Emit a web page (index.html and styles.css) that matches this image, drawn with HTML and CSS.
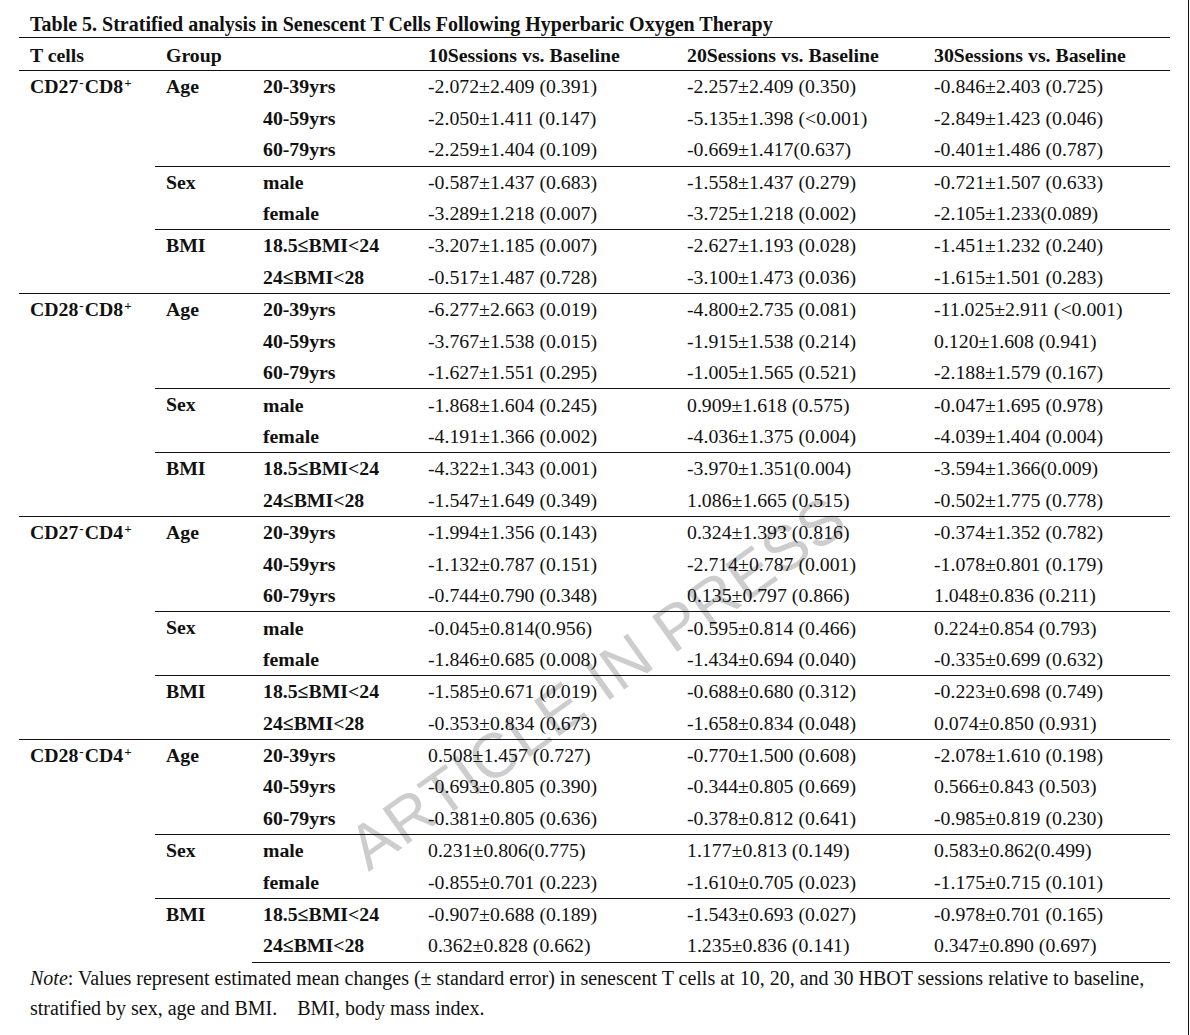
FILE: index.html
```
<!DOCTYPE html>
<html>
<head>
    <title>Table 5 - Stratified analysis</title>
    <link rel="stylesheet" href="styles.css">
</head>
<body>
    <div class="page">
        <h1 class="caption">Table 5. Stratified analysis in Senescent T Cells Following Hyperbaric Oxygen Therapy</h1>

        <div class="table-wrap">
            <div class="watermark">ARTICLE IN PRESS</div>
            <table class="strat-table">
                <colgroup>
                    <col class="col-cell">
                    <col class="col-group">
                    <col class="col-sub">
                    <col class="col-val1">
                    <col class="col-val2">
                    <col class="col-val3">
                </colgroup>
                <thead>
                    <tr>
                        <th>T cells</th>
                        <th colspan="2">Group</th>
                        <th>10Sessions vs. Baseline</th>
                        <th>20Sessions vs. Baseline</th>
                        <th>30Sessions vs. Baseline</th>
                    </tr>
                </thead>
                <tbody>
                    <tr>
                        <td rowspan="7" class="cell-name">CD27<sup>-</sup>CD8<sup>+</sup></td>
                        <td rowspan="3" class="group-name">Age</td>
                        <td class="sub">20-39yrs</td>
                        <td>-2.072±2.409 (0.391)</td>
                        <td>-2.257±2.409 (0.350)</td>
                        <td>-0.846±2.403 (0.725)</td>
                    </tr>
                    <tr>
                        <td class="sub">40-59yrs</td>
                        <td>-2.050±1.411 (0.147)</td>
                        <td>-5.135±1.398 (&lt;0.001)</td>
                        <td>-2.849±1.423 (0.046)</td>
                    </tr>
                    <tr>
                        <td class="sub">60-79yrs</td>
                        <td>-2.259±1.404 (0.109)</td>
                        <td>-0.669±1.417(0.637)</td>
                        <td>-0.401±1.486 (0.787)</td>
                    </tr>
                    <tr class="split">
                        <td rowspan="2" class="group-name">Sex</td>
                        <td class="sub">male</td>
                        <td>-0.587±1.437 (0.683)</td>
                        <td>-1.558±1.437 (0.279)</td>
                        <td>-0.721±1.507 (0.633)</td>
                    </tr>
                    <tr>
                        <td class="sub">female</td>
                        <td>-3.289±1.218 (0.007)</td>
                        <td>-3.725±1.218 (0.002)</td>
                        <td>-2.105±1.233(0.089)</td>
                    </tr>
                    <tr class="split">
                        <td rowspan="2" class="group-name">BMI</td>
                        <td class="sub">18.5≤BMI&lt;24</td>
                        <td>-3.207±1.185 (0.007)</td>
                        <td>-2.627±1.193 (0.028)</td>
                        <td>-1.451±1.232 (0.240)</td>
                    </tr>
                    <tr>
                        <td class="sub">24≤BMI&lt;28</td>
                        <td>-0.517±1.487 (0.728)</td>
                        <td>-3.100±1.473 (0.036)</td>
                        <td>-1.615±1.501 (0.283)</td>
                    </tr>
                </tbody>
                <tbody>
                    <tr>
                        <td rowspan="7" class="cell-name">CD28<sup>-</sup>CD8<sup>+</sup></td>
                        <td rowspan="3" class="group-name">Age</td>
                        <td class="sub">20-39yrs</td>
                        <td>-6.277±2.663 (0.019)</td>
                        <td>-4.800±2.735 (0.081)</td>
                        <td>-11.025±2.911 (&lt;0.001)</td>
                    </tr>
                    <tr>
                        <td class="sub">40-59yrs</td>
                        <td>-3.767±1.538 (0.015)</td>
                        <td>-1.915±1.538 (0.214)</td>
                        <td>0.120±1.608 (0.941)</td>
                    </tr>
                    <tr>
                        <td class="sub">60-79yrs</td>
                        <td>-1.627±1.551 (0.295)</td>
                        <td>-1.005±1.565 (0.521)</td>
                        <td>-2.188±1.579 (0.167)</td>
                    </tr>
                    <tr class="split">
                        <td rowspan="2" class="group-name">Sex</td>
                        <td class="sub">male</td>
                        <td>-1.868±1.604 (0.245)</td>
                        <td>0.909±1.618 (0.575)</td>
                        <td>-0.047±1.695 (0.978)</td>
                    </tr>
                    <tr>
                        <td class="sub">female</td>
                        <td>-4.191±1.366 (0.002)</td>
                        <td>-4.036±1.375 (0.004)</td>
                        <td>-4.039±1.404 (0.004)</td>
                    </tr>
                    <tr class="split">
                        <td rowspan="2" class="group-name">BMI</td>
                        <td class="sub">18.5≤BMI&lt;24</td>
                        <td>-4.322±1.343 (0.001)</td>
                        <td>-3.970±1.351(0.004)</td>
                        <td>-3.594±1.366(0.009)</td>
                    </tr>
                    <tr>
                        <td class="sub">24≤BMI&lt;28</td>
                        <td>-1.547±1.649 (0.349)</td>
                        <td>1.086±1.665 (0.515)</td>
                        <td>-0.502±1.775 (0.778)</td>
                    </tr>
                </tbody>
                <tbody>
                    <tr>
                        <td rowspan="7" class="cell-name">CD27<sup>-</sup>CD4<sup>+</sup></td>
                        <td rowspan="3" class="group-name">Age</td>
                        <td class="sub">20-39yrs</td>
                        <td>-1.994±1.356 (0.143)</td>
                        <td>0.324±1.393 (0.816)</td>
                        <td>-0.374±1.352 (0.782)</td>
                    </tr>
                    <tr>
                        <td class="sub">40-59yrs</td>
                        <td>-1.132±0.787 (0.151)</td>
                        <td>-2.714±0.787 (0.001)</td>
                        <td>-1.078±0.801 (0.179)</td>
                    </tr>
                    <tr>
                        <td class="sub">60-79yrs</td>
                        <td>-0.744±0.790 (0.348)</td>
                        <td>0.135±0.797 (0.866)</td>
                        <td>1.048±0.836 (0.211)</td>
                    </tr>
                    <tr class="split">
                        <td rowspan="2" class="group-name">Sex</td>
                        <td class="sub">male</td>
                        <td>-0.045±0.814(0.956)</td>
                        <td>-0.595±0.814 (0.466)</td>
                        <td>0.224±0.854 (0.793)</td>
                    </tr>
                    <tr>
                        <td class="sub">female</td>
                        <td>-1.846±0.685 (0.008)</td>
                        <td>-1.434±0.694 (0.040)</td>
                        <td>-0.335±0.699 (0.632)</td>
                    </tr>
                    <tr class="split">
                        <td rowspan="2" class="group-name">BMI</td>
                        <td class="sub">18.5≤BMI&lt;24</td>
                        <td>-1.585±0.671 (0.019)</td>
                        <td>-0.688±0.680 (0.312)</td>
                        <td>-0.223±0.698 (0.749)</td>
                    </tr>
                    <tr>
                        <td class="sub">24≤BMI&lt;28</td>
                        <td>-0.353±0.834 (0.673)</td>
                        <td>-1.658±0.834 (0.048)</td>
                        <td>0.074±0.850 (0.931)</td>
                    </tr>
                </tbody>
                <tbody>
                    <tr>
                        <td rowspan="7" class="cell-name">CD28<sup>-</sup>CD4<sup>+</sup></td>
                        <td rowspan="3" class="group-name">Age</td>
                        <td class="sub">20-39yrs</td>
                        <td>0.508±1.457 (0.727)</td>
                        <td>-0.770±1.500 (0.608)</td>
                        <td>-2.078±1.610 (0.198)</td>
                    </tr>
                    <tr>
                        <td class="sub">40-59yrs</td>
                        <td>-0.693±0.805 (0.390)</td>
                        <td>-0.344±0.805 (0.669)</td>
                        <td>0.566±0.843 (0.503)</td>
                    </tr>
                    <tr>
                        <td class="sub">60-79yrs</td>
                        <td>-0.381±0.805 (0.636)</td>
                        <td>-0.378±0.812 (0.641)</td>
                        <td>-0.985±0.819 (0.230)</td>
                    </tr>
                    <tr class="split">
                        <td rowspan="2" class="group-name">Sex</td>
                        <td class="sub">male</td>
                        <td>0.231±0.806(0.775)</td>
                        <td>1.177±0.813 (0.149)</td>
                        <td>0.583±0.862(0.499)</td>
                    </tr>
                    <tr>
                        <td class="sub">female</td>
                        <td>-0.855±0.701 (0.223)</td>
                        <td>-1.610±0.705 (0.023)</td>
                        <td>-1.175±0.715 (0.101)</td>
                    </tr>
                    <tr class="split">
                        <td rowspan="2" class="group-name">BMI</td>
                        <td class="sub">18.5≤BMI&lt;24</td>
                        <td>-0.907±0.688 (0.189)</td>
                        <td>-1.543±0.693 (0.027)</td>
                        <td>-0.978±0.701 (0.165)</td>
                    </tr>
                    <tr>
                        <td class="sub">24≤BMI&lt;28</td>
                        <td>0.362±0.828 (0.662)</td>
                        <td>1.235±0.836 (0.141)</td>
                        <td>0.347±0.890 (0.697)</td>
                    </tr>
                </tbody>
            </table>
        </div>

        <p class="note"><em>Note</em>: Values represent estimated mean changes (± standard error) in senescent T cells at 10, 20, and 30 HBOT sessions relative to baseline,<br>stratified by sex, age and BMI.&nbsp;&nbsp;&nbsp; BMI, body mass index.</p>
    </div>
</body>
</html>
```

FILE: styles.css
```
* {
    margin: 0;
    padding: 0;
    box-sizing: border-box;
}

body {
    background-color: #ffffff;
    color: #111111;
    font-family: "Liberation Serif", "Times New Roman", serif;
}

.page {
    width: 1189px;
    min-height: 100vh;
    padding: 11px 19px 0 19px;
    border-right: 1px solid #111111;
}

.caption {
    font-size: 20px;
    font-weight: bold;
    line-height: 26px;
    padding-left: 11px;
}

.table-wrap {
    position: relative;
    width: 1151px;
}

.watermark {
    position: absolute;
    left: 578px;
    top: 645px;
    transform: translate(-50%, -50%) rotate(-35.5deg);
    font-family: "Liberation Sans", Arial, sans-serif;
    font-size: 63px;
    color: #cdcdcd;
    white-space: nowrap;
    letter-spacing: 1px;
    pointer-events: none;
}

.strat-table {
    position: relative;
    width: 1151px;
    border-collapse: collapse;
    table-layout: fixed;
    font-size: 19.8px;
}

.col-cell { width: 136px; }
.col-group { width: 97px; }
.col-sub { width: 165px; }
.col-val1 { width: 259px; }
.col-val2 { width: 247px; }
.col-val3 { width: 247px; }

th, td {
    text-align: left;
    padding: 0 0 0 11px;
    white-space: nowrap;
    vertical-align: middle;
}

th {
    height: 33px;
    font-weight: bold;
    padding-top: 2px;
    border-top: 1px solid #111111;
    border-bottom: 1px solid #111111;
}

td {
    height: 31.85px;
}

tbody + tbody tr:first-child td,
tr.split td {
    border-top: 1px solid #111111;
}

tbody:last-child tr:last-child td {
    border-bottom: 1px solid #111111;
}

.cell-name,
.group-name {
    vertical-align: top;
    font-weight: bold;
    line-height: 31px;
}

.sub {
    font-weight: bold;
}

sup {
    font-size: 13px;
    vertical-align: 6px;
    line-height: 0;
    padding: 0 1px;
}

.note {
    font-size: 20px;
    line-height: 30px;
    padding-left: 11px;
}
```
